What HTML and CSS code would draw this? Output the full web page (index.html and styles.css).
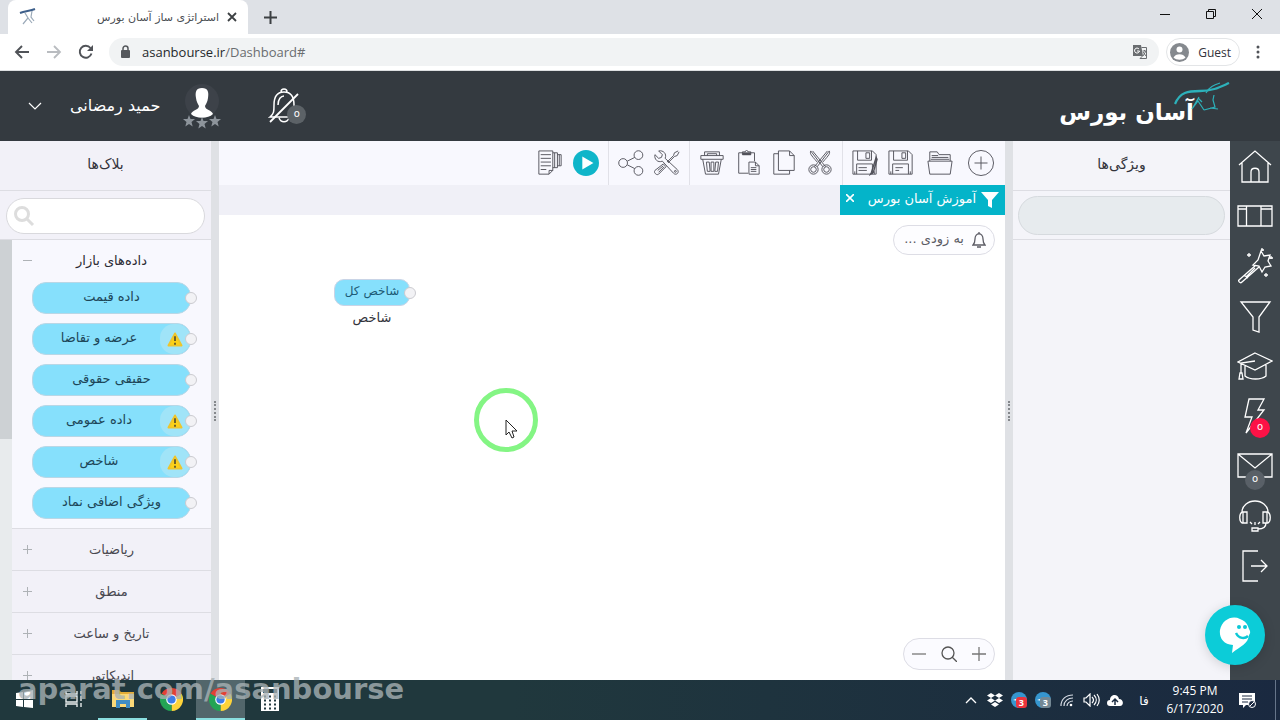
FILE: index.html
```html
<!DOCTYPE html>
<html lang="fa">
<head>
<meta charset="utf-8">
<title>استراتژی ساز آسان بورس</title>
<link rel="stylesheet" href="styles.css">
</head>
<body>
<div class="screen">
  <div class="tabstrip">
    <div class="browser-tab">
      <svg class="favicon" viewBox="0 0 18 18"><path d="M1 5C6 3 11 3 16 1" fill="none" stroke="#3d5f8a" stroke-width="2"/><path d="M6 5l3 5-5 6M9 10l4 5M13 3l-1 6 3 4" fill="none" stroke="#9aa9b8" stroke-width="1.2"/></svg>
      <span class="tab-title" dir="rtl">استراتژی ساز آسان بورس</span>
      <button class="plain" aria-label="Close tab"><svg width="10" height="10" viewBox="0 0 10 10"><path d="M1 1l8 8M9 1l-8 8" stroke="#3c4043" stroke-width="1.8"/></svg></button>
    </div>
    <button class="plain new-tab" aria-label="New tab"><svg width="13" height="13" viewBox="0 0 13 13"><path d="M6.500 0v13M0 6.500h13" stroke="#3c4043" stroke-width="2"/></svg></button>
    <div class="window-buttons">
      <button class="plain" aria-label="Minimize"><svg width="12" height="12" viewBox="0 0 12 12"><path d="M1 6.500h10" stroke="#111"/></svg></button>
      <button class="plain" aria-label="Restore"><svg width="12" height="12" viewBox="0 0 12 12" fill="none" stroke="#111"><path d="M1.500 3.500h7v7h-7zM3.500 3V1.500h7v7H9"/></svg></button>
      <button class="plain" aria-label="Close"><svg width="12" height="12" viewBox="0 0 12 12"><path d="M1 1l10 10M11 1L1 11" stroke="#111"/></svg></button>
    </div>
  </div>

  <div class="navbar">
    <button class="plain nav" aria-label="Back"><svg width="16" height="16" viewBox="0 0 16 16" fill="none" stroke="#505358" stroke-width="1.900"><path d="M15 8H2M8 2L2 8l6 6"/></svg></button>
    <button class="plain nav" aria-label="Forward"><svg width="16" height="16" viewBox="0 0 16 16" fill="none" stroke="#b9bcc0" stroke-width="1.800"><path d="M1 8h13M8 2l6 6-6 6"/></svg></button>
    <button class="plain nav" aria-label="Reload"><svg width="16" height="16" viewBox="0 0 16 16"><path d="M13.500 9.500A6 6 0 1 1 12.500 4" fill="none" stroke="#505358" stroke-width="1.900"/><path d="M15 1v6H9z" fill="#505358"/></svg></button>
    <div class="address">
      <svg width="12" height="14" viewBox="0 0 12 14"><rect x="1" y="5" width="9" height="8" rx="1" fill="#55585c"/><path d="M3 5.500V3.500a2.500 2.500 0 0 1 5 0v2" fill="none" stroke="#55585c" stroke-width="1.500"/></svg>
      <span class="url">asanbourse.ir<span class="path">/Dashboard#</span></span>
      <svg width="16" height="16" viewBox="0 0 16 16"><path d="M1 1h8l2 11H1z" fill="#6a6d70"/><path d="M9.500 3.500h5v11H8l3-3" fill="none" stroke="#6a6d70"/><path d="M7 5a2.500 2.500 0 1 0 .5 2H5" fill="none" stroke="#fff"/><path d="M10.500 7h4M12.500 6v1M11 12l3-5M11 8l3 4" stroke="#6a6d70" fill="none"/></svg>
    </div>
    <button class="guest"><svg width="19" height="19" viewBox="0 0 19 19"><circle cx="9.500" cy="9.500" r="9.500" fill="#85898e"/><circle cx="9.500" cy="6.500" r="3" fill="#fff"/><path d="M3.500 14.500c2-4.500 10-4.500 12 0-3 3-9 3-12 0z" fill="#fff"/></svg><span>Guest</span></button>
    <button class="plain menu" aria-label="Menu"><svg width="4" height="16" viewBox="0 0 4 16" fill="#505358"><circle cx="2" cy="3" r="1.500"/><circle cx="2" cy="8" r="1.500"/><circle cx="2" cy="13" r="1.500"/></svg></button>
  </div>

  <header class="site-header">
    <button class="plain user">
      <svg width="14" height="9" viewBox="0 0 14 9"><path d="M1 1l6 6 6-6" fill="none" stroke="#fff" stroke-width="1.200"/></svg>
      <span dir="rtl">حمید رمضانی</span>
      <svg width="40" height="48" viewBox="0 0 40 48"><circle cx="20" cy="19" r="17" fill="#3d4249"/><path d="M20 6c6 0 7 4 6 10-.5 4-2 6-3 8 0 4 7 4 8 8-5 5-17 5-22 0 1-4 8-4 8-8-1-2-2.500-4-3-8-1-6 0-10 6-10z" fill="#fff"/><g fill="#8d949b"><path id="star" d="M7 33l1.500 4h4.500l-3.500 3 1.200 4.500L7 42l-3.700 2.500L4.500 40 1 37h4.500z"/><use href="#star" x="13" y="2"/><use href="#star" x="26"/></g></svg>
    </button>
    <button class="plain alerts" aria-label="اعلان‌ها">
      <svg width="32" height="38" viewBox="0 0 32 38" fill="none" stroke="#fff" stroke-width="1.500"><path d="M13 5a3 3 0 0 1 6 0M2 30c4-3 4-6 4-12C6 9 10 5 16 5s10 4 10 13c0 6 0 9 4 12zM11 31c2 5 8 5 10 0M10 18c0-6 3-9 6-9"/><path d="M30 7L2 35" stroke-width="1.800"/></svg>
      <span class="count">o</span>
    </button>
    <a class="brand" href="#"><span dir="rtl">آسان بورس</span>
      <svg width="56" height="34" viewBox="0 0 56 34" fill="none" stroke="#2db1ba"><path d="M1 22C6 10 14 9 26 9c13 0 20-4 29-8" stroke-width="2.300"/><path d="M32 11c3-6 8-8 14-10M40 13l-1 5 2 7-11 3M25 15l-7 12 6-8 6 9M24 16l4 4M36 26l8 1" stroke-width="1.200"/></svg>
    </a>
  </header>

  <main class="workspace">
    <aside class="blocks">
      <h2 dir="rtl">بلاک‌ها</h2>
      <label class="search">
        <svg width="22" height="22" viewBox="0 0 22 22" fill="none" stroke="#ddd" stroke-width="3"><circle cx="9" cy="9" r="6.500"/><path d="M14 14l6 6"/></svg>
        <input type="text" dir="rtl" aria-label="جستجو">
      </label>
      <div class="block-scroll">
        <div class="scrollbar"><div class="thumb"></div></div>
        <div class="sections" dir="rtl">
          <section class="open">
            <button class="section-head">داده‌های بازار<span class="sign minus"></span></button>
            <div class="pills">
              <button class="pill"><span>داده قیمت</span><i class="port"></i></button>
              <button class="pill warn"><svg class="alert" viewBox="0 0 32 28"><path d="M16 8l7 13H9z" fill="#fcd116" stroke="#eec52c" stroke-width="2" stroke-linejoin="round"/><path d="M16 11v5M16 18v2" stroke="#333" stroke-width="1.500"/></svg><span>عرضه و تقاضا</span><i class="port"></i></button>
              <button class="pill"><span>حقیقی حقوقی</span><i class="port"></i></button>
              <button class="pill warn"><svg class="alert" viewBox="0 0 32 28"><path d="M16 8l7 13H9z" fill="#fcd116" stroke="#eec52c" stroke-width="2" stroke-linejoin="round"/><path d="M16 11v5M16 18v2" stroke="#333" stroke-width="1.500"/></svg><span>داده عمومی</span><i class="port"></i></button>
              <button class="pill warn"><svg class="alert" viewBox="0 0 32 28"><path d="M16 8l7 13H9z" fill="#fcd116" stroke="#eec52c" stroke-width="2" stroke-linejoin="round"/><path d="M16 11v5M16 18v2" stroke="#333" stroke-width="1.500"/></svg><span>شاخص</span><i class="port"></i></button>
              <button class="pill"><span>ویژگی اضافی نماد</span><i class="port"></i></button>
            </div>
          </section>
          <section><button class="section-head">ریاضیات<span class="sign"></span></button></section>
          <section><button class="section-head">منطق<span class="sign"></span></button></section>
          <section><button class="section-head">تاریخ و ساعت<span class="sign"></span></button></section>
          <section><button class="section-head">اندیکاتور<span class="sign"></span></button></section>
        </div>
      </div>
    </aside>
    <div class="splitter"><span></span></div>

    <div class="editor">
      <div class="toolbar">
        <div class="group">
          <button class="tool" aria-label="گزارش"><svg viewBox="0 0 28 28"><path d="M2 1h15v21l-4 4H2zM17 22h-4v4M4 5h11M4 9h11M4 13h11M4 17h11M4 21h6M17 3h5v16h-5M19 3v16M22 5h4v12h-4M24 5v12"/></svg></button>
          <button class="tool" aria-label="اجرا"><svg viewBox="0 0 28 28"><circle cx="14" cy="14" r="14" fill="#0fb5c9" stroke="none"/><path d="M10 7v14l12-7z" fill="#fff" stroke="none"/></svg></button>
        </div>
        <div class="group">
          <button class="tool" aria-label="اشتراک"><svg viewBox="0 0 28 28"><circle cx="5.500" cy="14" r="4.700"/><circle cx="22" cy="5.500" r="4.700"/><circle cx="22" cy="22.500" r="4.700"/><path d="M10 12l8-4M10 16l8 4"/></svg></button>
          <button class="tool" aria-label="تنظیمات"><svg viewBox="0 0 28 28"><path d="M5 1l4 4-1 3-3 1-4-4c-1 5 3 9 8 7l12 13c3 3 7-1 4-4L12 9c2-5-2-9-7-8zM26 1l-4 2-1 3-7 7M27 2l-2 4-3 1-7 7M10 15l3 3-8 8c-2 2-6-2-4-4zM4 22l6-5M5 24l6-6"/><circle cx="23" cy="23" r="1"/></svg></button>
        </div>
        <div class="group">
          <button class="tool" aria-label="حذف"><svg viewBox="0 0 28 28"><path d="M2 6h24v4H2zM6 6V2h16v4M9 6V4h10v2M4 10l3 16h14l3-16M8 13h3l1 10H9zM13 13h3v10h-3zM18 13h3l-1 10h-3z"/></svg></button>
          <button class="tool" aria-label="چسباندن"><svg viewBox="0 0 28 28"><path d="M14 25H4V3h4M16 3h5v9M8 5V2h3c0-2 3-2 3 0h3v3zM15 13h7l4 4v9H15zM22 13v4h4M17 19h6M17 21h6M17 23h6"/><path d="M8 4h9" stroke-width="3"/></svg></button>
          <button class="tool" aria-label="کپی"><svg viewBox="0 0 28 28"><path d="M8 1h12l5 5v16H8zM20 1v5h5M8 4H3v22h17v-4"/></svg></button>
          <button class="tool" aria-label="برش"><svg viewBox="0 0 28 28"><path d="M4 1l13 17M6 1l14 17M4 1c-1 3 0 4 7 12M24 1L11 18M22 1L8 18M24 1c1 3 0 4-7 12"/><circle cx="7" cy="21" r="5"/><circle cx="7" cy="21" r="3"/><circle cx="21" cy="21" r="5"/><circle cx="21" cy="21" r="3"/></svg></button>
        </div>
        <div class="group">
          <button class="tool" aria-label="ذخیره با نام"><svg viewBox="0 0 28 28"><path d="M1 1h21l4 4v21H1zM6 1v10h15V1M15 3h4v6h-4zM5 26V15h17v11M7 19h9M7 22h9M3 23v3M24 23v3"/><path d="M26 8l-5 16-1 2 3-2 4-14z" stroke-width="1.500"/></svg></button>
          <button class="tool" aria-label="ذخیره"><svg viewBox="0 0 28 28"><path d="M1 1h21l4 4v21H1zM6 1v10h15V1M15 3h4v6h-4zM5 26V15h17v11M8 19h8M8 22h4M3 23v3M24 23v3"/></svg></button>
          <button class="tool wide" aria-label="باز کردن"><svg viewBox="0 0 28 28"><path d="M1 12h26l-2 14H3zM3 12V2h8l2 3h12v7M5 8h18M4 10h20M5 6h7"/></svg></button>
          <button class="tool wide" aria-label="جدید"><svg viewBox="0 0 28 28"><circle cx="14" cy="14" r="13.500"/><path d="M14 7v14M7 14h14"/></svg></button>
        </div>
      </div>
      <div class="doc-tabs">
        <div class="doc-tab">
          <button class="plain" aria-label="بستن"><svg width="8" height="8" viewBox="0 0 8 8"><path d="M0 0l8 8M8 0L0 8" stroke="#fff" stroke-width="1.600"/></svg></button>
          <span dir="rtl">آموزش آسان بورس</span>
          <svg width="18" height="18" viewBox="0 0 18 18"><path d="M0 1h18l-7 8v8l-4-2V9z" fill="#fff"/></svg>
        </div>
      </div>
      <div class="canvas">
        <button class="soon"><span dir="rtl">به زودی ...</span><svg width="14" height="16" viewBox="0 0 14 16" fill="none" stroke="#5c5c65" stroke-width="1.300"><path d="M1 13h12c-2-2-2-3-2-6 0-7-8-7-8 0 0 3 0 4-2 6zM7 2V0M5 15h4"/></svg></button>
        <div class="node"><div class="node-box" dir="rtl">شاخص کل<i class="port"></i></div><span>شاخص</span></div>
        <div class="pointer-ring"></div>
        <svg class="pointer" width="13" height="20" viewBox="0 0 13 20"><path d="M1 1v15l3-3 3 6 2-1-2-6h5z" fill="#fff" stroke="#222"/></svg>
        <div class="zoomer">
          <button class="plain" aria-label="کوچک‌نمایی"><svg width="14" height="14" viewBox="0 0 14 14"><path d="M0 7h14" stroke="#777" stroke-width="1.300"/></svg></button>
          <button class="plain" aria-label="اندازه"><svg width="16" height="16" viewBox="0 0 16 16" fill="none" stroke="#555" stroke-width="1.300"><circle cx="7" cy="7" r="6"/><path d="M11 11l5 5"/></svg></button>
          <button class="plain" aria-label="بزرگ‌نمایی"><svg width="14" height="14" viewBox="0 0 14 14"><path d="M0 7h14M7 0v14" stroke="#777" stroke-width="1.300"/></svg></button>
        </div>
      </div>
    </div>

    <div class="splitter"><span></span></div>
    <aside class="properties">
      <h2 dir="rtl">ویژگی‌ها</h2>
      <div class="prop-name"><input type="text" disabled aria-label="ویژگی"></div>
    </aside>
    <nav class="rail">
      <a href="#" aria-label="خانه"><svg viewBox="0 0 36 36"><path d="M2 17L18 3l16 14M5 15v19h26V15M14 34V24c0-5 8-5 8 0v10"/></svg></a>
      <a href="#" aria-label="نما"><svg viewBox="0 0 36 36"><path d="M1 8h34v20H1zM9.500 8v20M24 8v20M1 11h8M24 11h11"/></svg></a>
      <a href="#" aria-label="جادوگر"><svg viewBox="0 0 36 36"><path d="M24 3l3 5 6-1-2 6 3 5-6 1-3 5-3-6-6-1 5-5zM19 17L2 32c-1 1 1 4 3 2l17-15M7 27l4 3M9 29l9-9"/><path d="M12 5v4M10 7h4M25 0v3M24 2h3M34 8v3M32 10h4M29 25v4M27 27h4"/></svg></a>
      <a href="#" aria-label="فیلتر"><svg viewBox="0 0 36 36"><path d="M4 4h29L22 19v15l-6-2V19z"/></svg></a>
      <a href="#" aria-label="آموزش"><svg viewBox="0 0 36 36"><path d="M18 5l17 8-17 9L1 14zM18 13L4 15v10M8 18v10c5 4 16 4 21 0V17M3 25h2l1 6H2z"/></svg></a>
      <a href="#" aria-label="هشدارها"><svg viewBox="0 0 36 36"><path d="M12 1h15l-6 11h6L9 35l6-16H8z"/></svg><span class="badge red">o</span></a>
      <a href="#" aria-label="پیام‌ها"><svg viewBox="0 0 36 36"><path d="M1 6h34v23H1zM1 6l17 14L35 6"/></svg><span class="badge">o</span></a>
      <a href="#" aria-label="پشتیبانی"><svg viewBox="0 0 36 36"><path d="M5 14a13 11 0 0 1 26 0M8 14H5c-3 2-3 9 0 11h3M28 14h3c3 2 3 9 0 11h-3M6 14h4v11H6zM26 14h4v11h-4zM29 25c0 5-4 6-8 6M15 30h6v3h-6zM13 24l2 2M18 24v3M23 24l-2 2"/></svg></a>
      <a href="#" aria-label="خروج"><svg viewBox="0 0 36 36"><path d="M21 3H6v30h15M14 18h16M24 12l6 6-6 6"/></svg></a>
    </nav>
    <button class="chat" aria-label="گفتگو"><svg width="32" height="38" viewBox="0 0 32 38"><path d="M13 37l1-8C4 29 0 21 1 14 3 4 13-1 21 3c8 3 8 8 9 10 2 3 1 5 0 6-1 9-8 11-17 18z" fill="#fff"/><circle cx="20" cy="11" r="2" fill="#0cc8d6"/><circle cx="26" cy="11" r="2" fill="#0cc8d6"/><path d="M17 17c3 6 9 6 12 3" fill="none" stroke="#0cc8d6" stroke-width="2.500"/></svg></button>
  </main>

  <footer class="taskbar">
    <button class="task" aria-label="Start"><svg width="18" height="18" viewBox="0 0 18 18" fill="#fff"><path d="M0 3l7-1v7H0zM8 2l9-2v9H8zM0 10h7v7l-7-1zM8 10h9v8l-9-1z"/></svg></button>
    <button class="task" aria-label="Task view"><svg width="18" height="18" viewBox="0 0 18 18" fill="none" stroke="#e9eded" stroke-width="1.400"><path d="M1 1v3h11V1M1 6h11v6H1zM1 17v-3h11v3M16 1v3M16 6v5M16 13v4"/></svg></button>
    <button class="task running" aria-label="File Explorer"><svg width="22" height="20" viewBox="0 0 22 20"><path d="M0 1h7l2 2h13v14H0z" fill="#e3ac37"/><path d="M0 5h22v13H0z" fill="#fbd978"/><path d="M4 19v-8h14v8h-4v-4H8v4z" fill="#408dc5"/></svg></button>
    <button class="task" aria-label="Chrome"><svg width="23" height="23" viewBox="0 0 24 24"><path d="M12 12L1.600 6A12 12 0 0 1 22.400 6z" fill="#e24234"/><path d="M12 12l10.400-6A12 12 0 0 1 12 24z" fill="#fdd33a"/><path d="M12 12v12A12 12 0 0 1 1.600 6z" fill="#23a455"/><circle cx="12" cy="12" r="5.500" fill="#fff"/><circle cx="12" cy="12" r="4.300" fill="#3e7de8"/></svg></button>
    <button class="task running active" aria-label="Chrome window"><svg width="23" height="23" viewBox="0 0 24 24"><path d="M12 12L1.600 6A12 12 0 0 1 22.400 6z" fill="#e24234"/><path d="M12 12l10.400-6A12 12 0 0 1 12 24z" fill="#fdd33a"/><path d="M12 12v12A12 12 0 0 1 1.600 6z" fill="#23a455"/><circle cx="12" cy="12" r="5.500" fill="#fff"/><circle cx="12" cy="12" r="4.300" fill="#3e7de8"/></svg></button>
    <button class="task" aria-label="Calculator"><svg width="18" height="24" viewBox="0 0 18 24"><path d="M0 0h18v24H0z" fill="#fff"/><path d="M2 2h14v4H2z" fill="#253b41"/><path d="M3 9.500h13M3 13.500h13M3 17.500h13M3 21.500h13" stroke="#253b41" stroke-width="2" stroke-dasharray="2 3"/></svg></button>
    <div class="tray">
      <button aria-label="Hidden icons"><svg width="12" height="8" viewBox="0 0 12 8"><path d="M1 7l5-5 5 5" fill="none" stroke="#fff" stroke-width="1.300"/></svg></button>
      <button aria-label="Dropbox"><svg width="16" height="14" viewBox="0 0 16 14" fill="#fff"><path d="M4 0l4 2.500L4 5 0 2.500zM12 0l4 2.500L12 5 8 2.500zM4 5l4 2.500L4 10 0 7.500zM12 5l4 2.500-4 2.500-4-2.500zM8 9l4 2.500L8 14l-4-2.500z"/></svg></button>
      <button aria-label="Telegram"><svg width="17" height="17" viewBox="0 0 17 17"><circle cx="8" cy="8" r="8" fill="#3696cf"/><path d="M2 8l6-2-1 3z" fill="#fff"/></svg><b class="mini red">3</b></button>
      <button aria-label="Telegram 2"><svg width="17" height="17" viewBox="0 0 17 17"><circle cx="8" cy="8" r="8" fill="#3696cf"/><path d="M2 8l6-2-1 3z" fill="#fff"/></svg><b class="mini">3</b></button>
      <button aria-label="Network"><svg width="14" height="14" viewBox="0 0 14 14" fill="none" stroke="#d6dce4" stroke-width="1.200"><path d="M1 13C1 6 6 2 13 2M4 13c0-5 4-8 9-8M7 13c0-3 3-5 6-5"/><circle cx="11" cy="12" r="1.300" fill="#fff" stroke="none"/></svg></button>
      <button aria-label="Volume"><svg width="17" height="14" viewBox="0 0 17 14" fill="none" stroke="#fff" stroke-width="1.200"><path d="M1 5h2l4-4v12L3 9H1zM9 4c2 2 2 4 0 6M11 2c3 3 3 7 0 10M14 1c3 4 3 8 0 12"/></svg></button>
      <button aria-label="Cloud"><svg width="16" height="12" viewBox="0 0 16 12"><path d="M3 12a3 3 0 0 1 0-6C3 0 11-1 12 5c5 0 5 7 1 7z" fill="#fff"/><path d="M8 11V6M5 8l3-3 3 3" fill="none" stroke="#1a2b40" stroke-width="1.500"/></svg></button>
      <button class="lang">فا</button>
      <button class="clock"><span>9:45 PM</span><span>6/17/2020</span></button>
      <button class="notes" aria-label="Notifications"><svg width="18" height="18" viewBox="0 0 18 18"><path d="M1 2h16v12H8l-3 3v-3H1z" fill="#fff"/><path d="M4 5h10M4 8h10M4 11h6" stroke="#1a2840"/><circle cx="14" cy="13" r="3.500" fill="#1a2840" stroke="#fff"/><path d="M12 15l4-4" stroke="#fff"/></svg></button>
    </div>
    <div class="watermark">aparat.com/asanbourse</div>
  </footer>
</div>
</body>
</html>
```
FILE: styles.css
```css
* { box-sizing: border-box; }
body { margin: 0; font-family: "DejaVu Sans", sans-serif; font-size: 13px; color: #33333b; }
button, input { font: inherit; color: inherit; }
button { padding: 0; border: 0; background: none; }
svg { display: block; flex: none; }
h2 { margin: 0; font-size: 14px; font-weight: 400; }
.plain { display: flex; align-items: center; justify-content: center; }

.screen { height: 100vh; display: flex; flex-direction: column; overflow: hidden; }

.tabstrip { display: flex; align-items: stretch; flex: none; height: 34px; padding-left: 8px; background: #dee1e6; }
.browser-tab { width: 240px; display: flex; align-items: center; gap: 8px; padding: 0 11px; background: #fff; border-radius: 8px 8px 0 0; }
.favicon { width: 18px; height: 18px; }
.tab-title { flex: 1; font-size: 11px; color: #4a4d52; }
.new-tab { width: 44px; }
.window-buttons { display: flex; margin-left: auto; padding-bottom: 6px; }
.window-buttons button { width: 46px; }

.navbar { display: flex; align-items: center; flex: none; height: 37px; padding: 0 10px 0 6px; background: #fff; border-bottom: 1px solid #dcdfe1; font-family: "Open Sans", "Noto Sans", sans-serif; }
.nav { width: 32px; height: 32px; }
.address { flex: 1; display: flex; align-items: center; gap: 10px; height: 28px; margin: 0 7px; padding: 0 11px; border-radius: 14px; background: #f1f3f4; }
.url { flex: 1; font-size: 13px; color: #25282b; }
.path { color: #6a6d70; }
.guest { display: flex; align-items: center; gap: 9px; height: 28px; padding: 0 8px 0 3px; border: 1px solid #e3e5e7; border-radius: 14px; font-size: 12px; }
.menu { width: 24px; margin-left: 6px; }

.site-header { display: flex; align-items: center; flex: none; height: 70px; padding: 0 50px 0 28px; background: #343a40; color: #fff; }
.user { gap: 22px; font-size: 16px; }
.user span { padding: 0 0 2px 6px; }
.alerts { position: relative; margin-left: 46px; }
.count { position: absolute; right: -6px; bottom: 1px; width: 19px; height: 19px; border-radius: 50%; background: #5c6267; font-size: 10px; line-height: 17px; }
.brand { display: flex; align-items: center; margin-left: auto; color: #fff; text-decoration: none; font-size: 23px; font-weight: 700; }
.brand span { padding-top: 12px; }
.brand svg { margin: 0 0 14px -20px; }

.workspace { position: relative; flex: 1; min-height: 0; display: flex; background: #f4f4f9; }
.blocks { width: 211px; display: flex; flex-direction: column; background: #f2f1f8; }
.blocks h2, .properties h2 { height: 50px; flex: none; border-bottom: 1px solid #dddde3; text-align: center; line-height: 46px; }
.search { display: flex; align-items: center; flex: none; height: 36px; margin: 7px 6px 5px; padding: 0 6px; background: #fff; border: 1px solid #d9d9dd; border-radius: 18px; }
.search input { flex: 1; min-width: 0; border: 0; outline: 0; background: none; }
.block-scroll { flex: 1; min-height: 0; display: flex; overflow: hidden; border-top: 1px solid #dcdce2; }
.scrollbar { width: 12px; background: #e8ebed; }
.thumb { height: 199px; background: #cdd1d4; }
.sections { flex: 1; }
.sections section { border-bottom: 1px solid #dddde3; }
.open { background: #f8f8fe; }
.section-head { position: relative; display: block; width: 100%; height: 41px; text-align: center; color: #484850; font-size: 13px; line-height: 37px; }
.open .section-head { color: #2b2b33; }
.sign { position: absolute; left: 11px; top: 20px; width: 9px; height: 1px; background: #aeb2b6; }
.sign::after { content: ""; position: absolute; left: 4px; top: -4px; width: 1px; height: 9px; background: #aeb2b6; }
.minus::after { display: none; }
.pills { display: grid; gap: 9px; padding: 1px 20px 9px; }
.pill { position: relative; display: flex; align-items: center; height: 32px; border: 1px solid #b9d7e6; border-radius: 14px; background: #86e0fc; color: #1d4658; }
.pill span { flex: 1; text-align: center; padding-bottom: 3px; }
.warn span { padding-left: 0; margin-right: -5px; }
.alert { width: 30px; height: 30px; background: #a0e4f8; border-radius: 14px; }
.port { position: absolute; right: -7px; top: 50%; width: 12px; height: 12px; margin-top: -6px; border: 1px solid #cbcbd0; border-radius: 50%; background: #f2f2f5; }

.splitter { width: 8px; flex: none; display: flex; align-items: center; justify-content: center; background: #dfe1e5; }
.splitter span { height: 20px; border-left: 2px dotted #85888c; }

.editor { flex: 1; min-width: 0; display: flex; flex-direction: column; }
.toolbar { display: flex; justify-content: flex-end; flex: none; height: 44px; padding-right: 3px; background: #f8f8fe; }
.group { display: flex; align-items: center; padding: 0 4px; border-left: 1px solid #e1e1e8; }
.group:first-child { border-left: 0; }
.group:last-child { padding-right: 1px; }
.tool { width: 36px; display: flex; justify-content: center; }
.wide { width: 41px; }
.tool svg { width: 26px; height: 26px; fill: none; stroke: #51515a; stroke-width: 1; }
.doc-tabs { display: flex; justify-content: flex-end; flex: none; height: 30px; background: #f0f0f7; }
.doc-tab { display: flex; align-items: center; gap: 5px; padding: 0 6px; background: #04b4c9; color: #fff; }
.doc-tab span { padding: 0 0 3px 9px; }
.doc-tab button { padding-bottom: 4px; }
.canvas { position: relative; flex: 1; background: #fff; }
.soon { position: absolute; right: 10px; top: 10px; display: flex; align-items: center; gap: 8px; height: 30px; padding: 0 8px 0 10px; border: 1px solid #dddde5; border-radius: 15px; background: #fdfdff; color: #5c5c65; }
.soon span { padding-bottom: 3px; }
.node { position: absolute; left: 115px; top: 64px; width: 76px; text-align: center; }
.node-box { position: relative; height: 27px; margin-bottom: 4px; border: 1px solid #c9d4e6; border-radius: 10px; background: #86e0fc; color: #1d5a75; font-size: 12px; line-height: 23px; }
.pointer-ring { position: absolute; left: 255px; top: 173px; width: 64px; height: 64px; border: 5px solid #84f584; border-radius: 50%; }
.pointer { position: absolute; left: 286px; top: 204px; }
.zoomer { position: absolute; right: 10px; bottom: 10px; width: 92px; height: 32px; display: flex; align-items: center; justify-content: space-between; padding: 0 8px; border: 1px solid #dddde5; border-radius: 16px; background: #fbfbff; }

.properties { width: 217px; background: #f4f4f9; }
.prop-name { padding: 5px 5px 4px; border-bottom: 1px solid #dddde3; }
.prop-name input { display: block; width: 100%; height: 39px; border: 1px solid #d6dade; border-radius: 20px; background: #e7ebee; }

.rail { width: 50px; flex: none; background: #3e464c; }
.rail a { position: relative; display: flex; align-items: center; justify-content: center; height: 50px; color: #fff; text-decoration: none; }
.rail svg { width: 36px; height: 36px; fill: none; stroke: #fff; stroke-width: 1.3; }
.badge { position: absolute; right: 15px; bottom: 1px; width: 20px; height: 20px; border-radius: 50%; background: #596067; text-align: center; font-size: 10px; line-height: 18px; }
.badge.red { right: 10px; bottom: 3px; background: #fc1246; }
.chat { position: absolute; right: 15px; bottom: 15px; width: 60px; height: 60px; display: flex; align-items: center; justify-content: center; border-radius: 50%; background: #0cccd8; box-shadow: 0 2px 12px rgba(0, 0, 0, .15); }

.taskbar { position: relative; display: flex; flex: none; height: 40px; background: linear-gradient(90deg, #20383d 40%, #1a2940); color: #fff; }
.task { width: 49px; display: flex; align-items: center; justify-content: center; border-bottom: 2px solid transparent; }
.running { border-bottom-color: #8adfe0; }
.active { background: #52666b; }
.tray { display: flex; margin-left: auto; margin-right: 4px; padding-right: 10px; border-right: 1px solid #66758a; font-family: "Open Sans", "DejaVu Sans", sans-serif; font-size: 12px; }
.tray button { position: relative; width: 24px; display: flex; align-items: center; justify-content: center; }
.mini { position: absolute; right: 4px; bottom: 12px; padding: 0 3px; border-radius: 3px; background: #748894; font-size: 9px; line-height: 11px; }
.mini.red { background: #ec343d; }
.tray .lang { width: 34px; }
.tray .clock { width: 68px; flex-direction: column; line-height: 18px; }
.tray .notes { width: 36px; }
.watermark { position: absolute; left: 18px; top: -7px; font-size: 29px; font-weight: 700; line-height: 32px; color: rgba(168, 178, 181, .78); }
```
